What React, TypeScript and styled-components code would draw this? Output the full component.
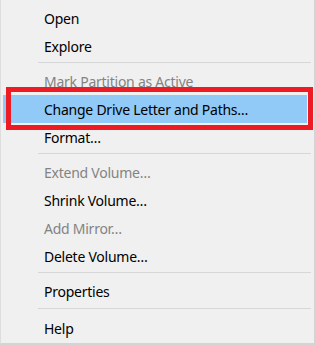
import { createGlobalStyle, styled } from 'styled-components';

type Entry =
  | { kind: 'item'; label: string; disabled?: boolean; active?: boolean }
  | { kind: 'sep'; tall?: boolean };

const entries: Entry[] = [
  { kind: 'item', label: 'Open' },
  { kind: 'item', label: 'Explore' },
  { kind: 'sep' },
  { kind: 'item', label: 'Mark Partition as Active', disabled: true },
  { kind: 'item', label: 'Change Drive Letter and Paths…', active: true },
  { kind: 'item', label: 'Format…' },
  { kind: 'sep' },
  { kind: 'item', label: 'Extend Volume…', disabled: true },
  { kind: 'item', label: 'Shrink Volume…' },
  { kind: 'item', label: 'Add Mirror…', disabled: true },
  { kind: 'item', label: 'Delete Volume…' },
  { kind: 'sep' },
  { kind: 'item', label: 'Properties' },
  { kind: 'sep', tall: true },
  { kind: 'item', label: 'Help' },
];

const App = () => {
  return (
    <>
      <GlobalStyle />
      <Menu>
        {entries.map((entry, i) =>
          entry.kind === 'sep' ? (
            <Separator key={i} $tall={entry.tall} />
          ) : (
            <Item key={i} $disabled={entry.disabled} $active={entry.active}>
              {entry.label}
              {entry.active && <Callout />}
            </Item>
          ),
        )}
      </Menu>
    </>
  );
};

export default App;

const GlobalStyle = createGlobalStyle`
  body {
    margin: 0;
    background: #f0f0f0;
    font-family: "Noto Sans", "Open Sans", sans-serif;
  }
`;

const Menu = styled.div`
  width: 315px;
  height: 345px;
  box-sizing: border-box;
  padding-top: 4px;
  background: #f0f0f0;
  border-left: 1px solid #dddddd;
  border-right: 1px solid #d4d4d4;
  border-bottom: 2px solid #d4d4d4;
  display: flex;
  flex-direction: column;
`;

const Item = styled.div<{ $disabled?: boolean; $active?: boolean }>`
  position: relative;
  height: 28px;
  margin: 0 7px 0 2px;
  padding-left: 41px;
  display: flex;
  align-items: center;
  font-size: 14px;
  letter-spacing: -0.25px;
  white-space: nowrap;
  color: ${(p) => (p.$disabled ? '#838383' : '#000000')};
  background: ${(p) => (p.$active ? '#91c9f7' : 'transparent')};
`;

const Separator = styled.div<{ $tall?: boolean }>`
  height: 1px;
  margin: ${(p) => (p.$tall ? '3px 3px 5px 37px' : '2px 3px 4px 37px')};
  background: #d7d7d7;
`;

const Callout = styled.span`
  position: absolute;
  top: -8px;
  bottom: -7px;
  left: 3px;
  right: -6px;
  border: 5px solid #ed1c24;
`;
